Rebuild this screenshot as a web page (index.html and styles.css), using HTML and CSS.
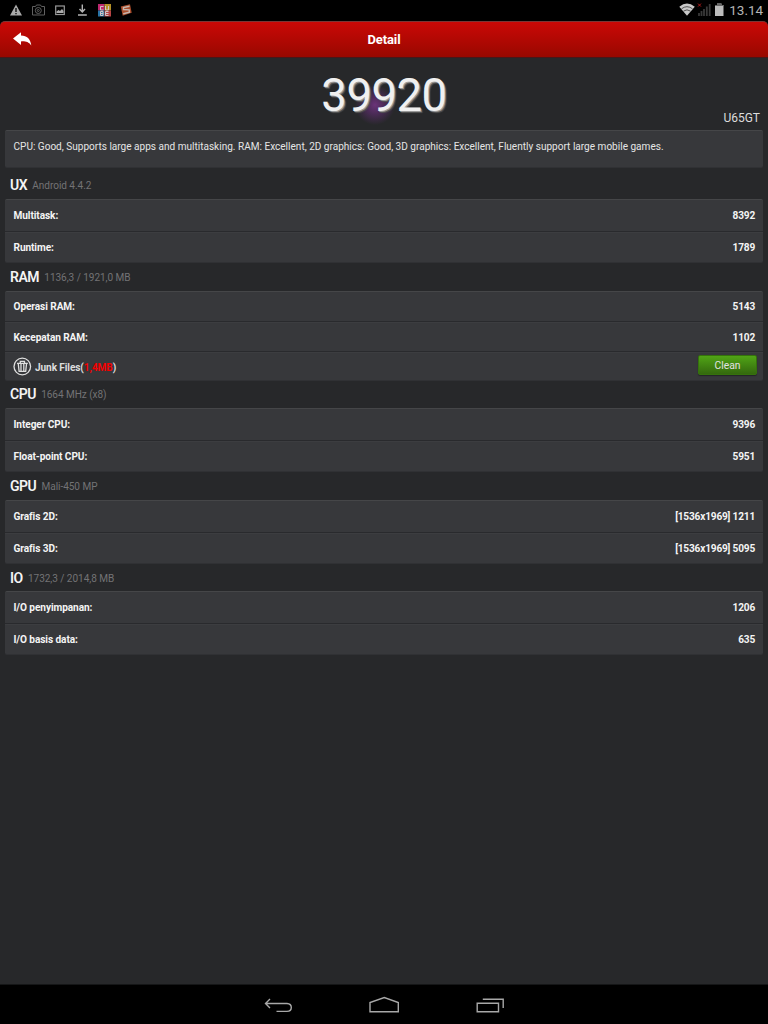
FILE: index.html
```html
<!DOCTYPE html>
<html lang="id">
<head>
<meta charset="utf-8">
<title>Detail</title>
<link rel="stylesheet" href="styles.css">
</head>
<body>
<div class="screen">
  <div class="status">
    <svg class="status-icons" width="140" height="20" viewBox="0 0 140 20">
      <path d="M16 4.500L22 15.500H10Z" fill="#aaa"/><path d="M15.300 8h1.400v4h-1.400zM15.300 13h1.400v1.300h-1.400z" fill="#111"/>
      <g fill="none" stroke="#606060" stroke-width="1"><path d="M32.500 6.500h3l1-1.500h4l1 1.500h3v8.500h-12z"/><circle cx="38.300" cy="10.500" r="3"/><circle cx="38.300" cy="10.500" r="1"/></g>
      <rect x="55.700" y="6" width="8.600" height="8.500" fill="none" stroke="#999" stroke-width="1.200"/><path d="M56.500 13v-1.500l2-1.500 1.500 1 2-2 1.500 2v2z" fill="#aaa"/>
      <path d="M82.300 4.500v7M79.500 9l2.800 3L85 9M78 15h8.800" fill="none" stroke="#b4b4b4" stroke-width="1.400"/>
      <rect x="98" y="4" width="6.500" height="6.500" fill="#bd286f"/><rect x="104.500" y="4" width="6.500" height="6.500" fill="#b59127"/><rect x="98" y="10.500" width="6.500" height="6" fill="#2874a5"/><rect x="104.500" y="10.500" width="6.500" height="6" fill="#b84444"/>
      <path d="M103.500 6.500h-3v3.500h3M105.500 6v4h3V6M100.500 15.500v-4h2.500v4zM100.500 13.500h2.500M108.500 11.500h-3v4h3M105.500 13.500h3" fill="none" stroke="#d0c5c5" stroke-width="1"/>
      <path d="M120.800 6.500l9.200-2.200 1.700 8.500-9 3z" fill="#a94d2b"/><path d="M129.500 6.200l-6 1.300 0 2 5.700.4.200 2.300-6.200 1.600" fill="none" stroke="#c5b5ac" stroke-width="1.400"/>
    </svg>
    <div class="status-right">
      <svg width="48" height="20" viewBox="678 0 48 20">
        <path d="M680.300 6.800Q688 0 695.800 6.800L688 15.800Z" fill="#c8c8c8"/>
        <path d="M682.500 8.800Q688 4.600 693.500 8.800M684.500 11.100Q688 8.600 691.500 11.100" fill="none" stroke="#333" stroke-width=".8"/>
        <path d="M699 3.600l3 3M702 3.600l-3 3" stroke="#b31919" stroke-width="1"/>
        <path d="M700 16v-3M702.500 16v-5M705 16V9M707.800 16V6.500M710.700 16V4" stroke="#393939" stroke-width="1.800"/>
        <path d="M716 5h2V3.500h4.500V5h2v11H716z" fill="#bcbcbc"/><path d="M716 5h2V3.500h4.500V5h2v1H716z" fill="#666"/>
      </svg>
      <span class="clock">13.14</span>
    </div>
  </div>
  <header class="titlebar">
    <svg class="reply" width="20" height="16" viewBox="0 0 20 16"><path d="M0 7.400L8 1.200V4.500C14 4.500 17.500 8 18.300 14.500C15.300 10.800 13 10.200 8 10.400V14Z" fill="#fff"/></svg>
    <h1>Detail</h1>
  </header>
  <main>
    <div class="hero"><div class="score">39920</div><div class="model">U65GT</div></div>
    <div class="panel summary"><span>CPU: Good, Supports large apps and multitasking. RAM: Excellent, 2D graphics: Good, 3D graphics: Excellent, Fluently support large mobile games.</span></div>
    <section class="first"><h2>UX <small>Android 4.4.2</small></h2>
      <div class="panel"><div class="row"><b>Multitask:</b><b class="value">8392</b></div><div class="row"><b>Runtime:</b><b class="value">1789</b></div></div></section>
    <section><h2>RAM <small>1136,3 / 1921,0 MB</small></h2>
      <div class="panel ram"><div class="row"><b>Operasi RAM:</b><b class="value">5143</b></div><div class="row"><b>Kecepatan RAM:</b><b class="value">1102</b></div>
        <div class="row junk"><div class="junk-label">
          <svg width="19" height="19" viewBox="0 0 19 19" fill="none" stroke="#dedede"><circle cx="9.300" cy="9.500" r="8.300" stroke-width="1.300"/><path d="M4 6.300h10.800M7.300 6V4.300h4.200V6M5.300 7l.8 7.300h6.600l.8-7.300M8 7v7M10.800 7v7" stroke-width="1.300"/></svg>
          <b>Junk Files(<em>1,4MB</em>)</b></div><button class="clean">Clean</button></div></div></section>
    <section><h2>CPU <small>1664 MHz (x8)</small></h2>
      <div class="panel"><div class="row"><b>Integer CPU:</b><b class="value">9396</b></div><div class="row"><b>Float-point CPU:</b><b class="value">5951</b></div></div></section>
    <section><h2>GPU <small>Mali-450 MP</small></h2>
      <div class="panel"><div class="row"><b>Grafis 2D:</b><b class="value">[1536x1969] 1211</b></div><div class="row"><b>Grafis 3D:</b><b class="value">[1536x1969] 5095</b></div></div></section>
    <section class="last"><h2>IO <small>1732,3 / 2014,8 MB</small></h2>
      <div class="panel"><div class="row"><b>I/O penyimpanan:</b><b class="value">1206</b></div><div class="row"><b>I/O basis data:</b><b class="value">635</b></div></div></section>
  </main>
  <nav>
    <svg width="28" height="18" viewBox="264.500 996 28 18"><path d="M270.500 999L266 1003.500L270.500 1008M266.500 1003.500H287.500Q291.800 1003.700 291.800 1007.500T287.500 1011.400H277"/></svg>
    <svg width="32" height="18" viewBox="368 996 32 18"><path d="M370 1011.800V1002.600L384.300 997.500L398.300 1002.600V1011.800Z"/></svg>
    <svg width="28" height="18" viewBox="476.500 996 28 18"><path d="M477.700 1003.300H499V1011.800H477.700ZM483.300 999.300H503.700V1008"/></svg>
  </nav>
</div>
</body>
</html>
```
FILE: styles.css
```css
* { box-sizing: border-box; }
body { margin: 0; background: #000; font-family: Roboto, "Liberation Sans", sans-serif; }
.screen { width: 768px; height: 1024px; display: flex; flex-direction: column; overflow: hidden; }
.status { height: 20.5px; display: flex; justify-content: space-between; background: #000; }
.status svg { display: block; }
.status-right { display: flex; padding-right: 5px; gap: 4px; }
.clock { color: #b5b5b5; font-size: 13.5px; line-height: 21px; letter-spacing: -.05px; }
.titlebar { height: 37.5px; display: grid; grid-template-columns: 1fr auto 1fr; align-items: center; padding: 0 13px; background: linear-gradient(#cb0806, #980800); border-top: 1px solid #7b3535; border-bottom: 1px solid #481719; border-radius: 5px 5px 0 0; }
.titlebar h1 { margin: 0; padding-top: 1px; color: #fff; font-size: 13px; line-height: 34px; font-weight: 700; letter-spacing: -.1px; }
main { flex: 1; background: #27282a; padding: 0 5px; }
.hero { height: 72px; display: grid; grid-template-columns: 1fr auto 1fr; background: radial-gradient(circle 20px at 370px 47px, #6a3378 0%, #4b2b57 45%, #27282a 100%); }
.score { grid-column: 2; font-size: 45.5px; line-height: 76px; height: 72px; color: #f0f0f0; text-shadow: 1px 1px 0 #999, 2px 2px 1px #555; letter-spacing: -.5px; }
.model { align-self: end; text-align: right; font-size: 12px; line-height: 14px; padding: 0 3px 5px 0; color: #ddd; }
.panel { background: #37383b; border-radius: 2px; border-top: 1px solid #454648; border-bottom: 1px solid #303134; }
.summary { height: 38px; padding: 7px 8.5px; color: #e5e5e5; font-size: 10.06px; line-height: 17px; white-space: nowrap; }
section { margin: 0; }
h2 { margin: 0; height: 28px; padding: 0 5px; line-height: 29px; font-size: 14px; font-weight: 600; letter-spacing: -.5px; color: #f4f4f4; display: flex; align-items: center; gap: 5.3px; white-space: nowrap; }
.first h2 { height: 31px; padding-top: 4px; }
.last h2 { height: 27px; padding-top: 1px; }
small { font-size: 10.05px; font-weight: 400; letter-spacing: -.05px; color: #737375; }
section .panel { height: 64px; }
.row { height: 31px; display: flex; justify-content: space-between; align-items: center; padding: 0 8px 0 8.5px; color: #f4f4f4; font-size: 10.1px; letter-spacing: -.08px; }
.row + .row { height: 32px; border-top: 1px solid #292a2d; box-shadow: inset 0 1px #3c3d40; }
.value { font-size: 10.1px; letter-spacing: -.18px; }
section .ram { height: 90px; margin-bottom: -1px; }
.ram .row { height: 29px; }
.ram .row + .row { height: 30px; padding-top: 1px; }
.ram .junk.junk { height: 29px; padding-right: 6px; padding-bottom: 1px; padding-left: 8px; }
.junk-label { display: flex; align-items: center; gap: 3px; color: #ddd; }
.junk-label b { padding-top: 2px; letter-spacing: -.1px; }
em { font-style: normal; color: #f40000; }
.clean { width: 59px; height: 20px; margin-top: -2px; padding: 0; border: 1px solid #35720c; border-radius: 2px; background: linear-gradient(#50a416, #34690e); color: #e2e2e2; font: 10.3px Roboto, sans-serif; box-shadow: 0 1px 1px #242528; }
nav { height: 40px; background: #000; border-top: 1px solid #151617; display: flex; justify-content: center; align-items: center; gap: 76px; }
nav svg { fill: none; stroke: #a8a8a8; stroke-width: 1.4; }
```
